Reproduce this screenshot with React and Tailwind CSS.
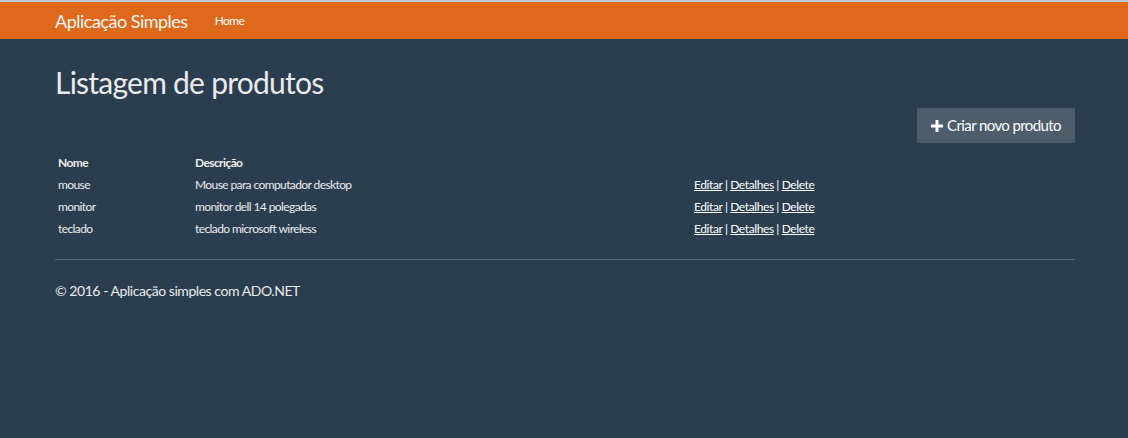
import React from 'react';

const produtos = [
  { id: 1, nome: 'mouse', descricao: 'Mouse para computador desktop' },
  { id: 2, nome: 'monitor', descricao: 'monitor dell 14 polegadas' },
  { id: 3, nome: 'teclado', descricao: 'teclado microsoft wireless' },
];

function App() {
  return (
    <div className="min-h-[438px] bg-[#2b3e50] text-[#ebebeb]" style={{ fontFamily: 'Lato, "Open Sans", sans-serif' }}>
      {/* Navbar */}
      <div className="h-[2px] bg-[#b9cadb]" />
      <nav className="h-[37px] bg-[#df691a] flex items-center px-[55px]">
        <span className="text-[18px] tracking-[-0.5px] text-[#f5f5f5] leading-none">Aplicação Simples</span>
        <a className="ml-[27px] text-[12px] tracking-[-0.6px] text-white leading-none">Home</a>
      </nav>

      <div className="px-[53px]">
        <h1 className="pl-[2px] pt-[25px] text-[30px] tracking-[-0.75px] leading-[36px] font-normal text-[#ebebeb]">Listagem de produtos</h1>

        <div className="flex justify-end mt-[8px]">
          <button className="h-[35px] w-[158px] bg-[#4e5d6c] text-white text-[15px] tracking-[-0.6px] flex items-center justify-center gap-[4px]">
            <svg width="12" height="12" viewBox="0 0 12 12">
              <path d="M4.5 0h3v4.5H12v3H7.5V12h-3V7.5H0v-3h4.5z" fill="#ffffff" />
            </svg>
            Criar novo produto
          </button>
        </div>

        {/* Tabela de produtos */}
        <table className="w-[1022px] mt-[9px] text-[12px] tracking-[-0.6px] border-collapse">
          <thead>
            <tr>
              <th className="w-[140px] text-left font-bold px-[5px] py-0 h-[22px]">Nome</th>
              <th className="w-[499px] text-left font-bold px-[2px] h-[22px]">Descrição</th>
              <th />
            </tr>
          </thead>
          <tbody>
            {produtos.map((p) => (
              <tr key={p.id} className="h-[22px]">
                <td className="px-[5px]">{p.nome}</td>
                <td className="px-[2px]">{p.descricao}</td>
                <td className="px-[2px] text-white tracking-[-0.4px]">
                  <a className="underline">Editar</a> | <a className="underline">Detalhes</a> | <a className="underline">Delete</a>
                </td>
              </tr>
            ))}
          </tbody>
        </table>

        <hr className="mt-[19px] ml-[2px] w-[1020px] border-0 border-t border-[#596a7b]" />
        <footer className="pl-[2px] pt-[20px] text-[14px] tracking-[-0.45px]">© 2016 - Aplicação simples com ADO.NET</footer>
      </div>
    </div>
  );
}

export default App;
